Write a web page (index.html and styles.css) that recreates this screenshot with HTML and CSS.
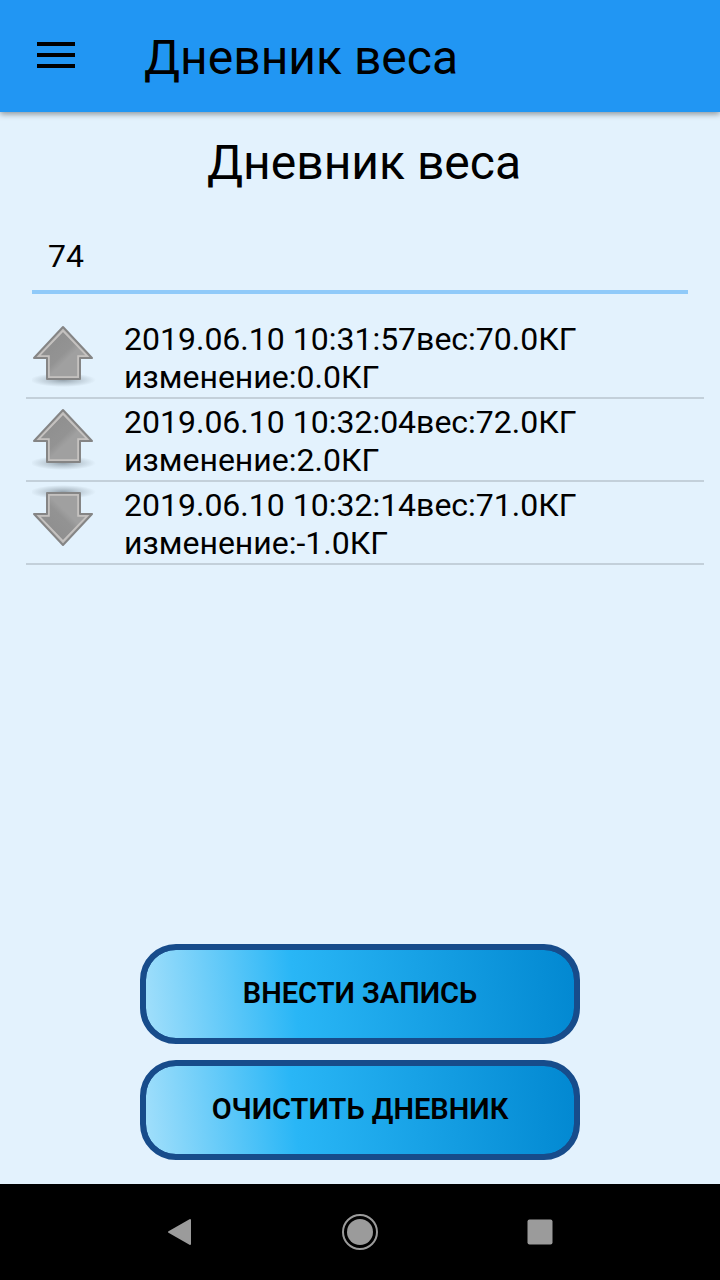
FILE: index.html
```html
<!DOCTYPE html>
<html lang="ru">
<head>
    <meta charset="utf-8">
    <meta name="viewport" content="width=device-width, initial-scale=1">
    <title>Дневник веса</title>
    <link rel="stylesheet" href="styles.css">
</head>
<body>
    <!-- shared arrow picture for the list -->
    <svg class="defs" width="0" height="0" aria-hidden="true">
        <defs>
            <linearGradient id="metal" x1="0" y1="0" x2="1" y2="1">
                <stop offset="0" stop-color="#8c8c8c"/>
                <stop offset="0.5" stop-color="#939393"/>
                <stop offset="0.6" stop-color="#a0a0a0"/>
                <stop offset="1" stop-color="#a0a0a0"/>
            </linearGradient>
            <radialGradient id="shade">
                <stop offset="0" stop-color="#5f6c76" stop-opacity="0.6"/>
                <stop offset="0.5" stop-color="#6c7a84" stop-opacity="0.3"/>
                <stop offset="1" stop-color="#6c7a84" stop-opacity="0"/>
            </radialGradient>
            <symbol id="arrow" viewBox="0 0 64 64">
                <ellipse cx="31" cy="56" rx="33" ry="7" fill="url(#shade)"/>
                <path d="M31 3 L60 34 H48 V55 H15 V34 H2 Z" fill="#bcbab8" stroke="#858585" stroke-width="2" stroke-linejoin="round"/>
                <path d="M31 7 L55 32 H46 V53 H17 V32 H7 Z" fill="url(#metal)" stroke="#c6c3c1" stroke-width="1.500"/>
            </symbol>
        </defs>
    </svg>

    <header class="toolbar">
        <button class="menu-button" type="button" aria-label="Меню">
            <svg width="38" height="26" viewBox="0 0 38 26">
                <path d="M0 2h38M0 13h38M0 24h38" stroke="#000" stroke-width="4"/>
            </svg>
        </button>
        <span class="toolbar-title">Дневник веса</span>
    </header>

    <main class="content">
        <h1>Дневник веса</h1>
        <input class="weight" type="text" inputmode="decimal" value="74" aria-label="Вес">

        <ul class="diary">
            <li>
                <svg class="arrow"><use href="#arrow"/></svg>
                <p>2019.06.10 10:31:57вес:70.0КГ<br>изменение:0.0КГ</p>
            </li>
            <li>
                <svg class="arrow"><use href="#arrow"/></svg>
                <p>2019.06.10 10:32:04вес:72.0КГ<br>изменение:2.0КГ</p>
            </li>
            <li>
                <svg class="arrow down"><use href="#arrow"/></svg>
                <p>2019.06.10 10:32:14вес:71.0КГ<br>изменение:-1.0КГ</p>
            </li>
        </ul>

        <div class="actions">
            <button class="action" type="button">ВНЕСТИ ЗАПИСЬ</button>
            <button class="action" type="button">ОЧИСТИТЬ ДНЕВНИК</button>
        </div>
    </main>

    <nav class="navbar">
        <button type="button" aria-label="Назад">
            <svg width="36" height="36" viewBox="0 0 36 36">
                <path d="M7 18 L28 6 V30 Z" fill="#9b9b9b" stroke="#9b9b9b" stroke-width="2" stroke-linejoin="round"/>
            </svg>
        </button>
        <button type="button" aria-label="Домой">
            <svg width="36" height="36" viewBox="0 0 36 36">
                <circle cx="18" cy="18" r="17" fill="none" stroke="#9b9b9b" stroke-width="2"/>
                <circle cx="18" cy="18" r="13" fill="#9b9b9b"/>
            </svg>
        </button>
        <button type="button" aria-label="Недавние">
            <svg width="36" height="36" viewBox="0 0 36 36">
                <rect x="5.500" y="5.500" width="25" height="25" rx="2" fill="#9b9b9b"/>
            </svg>
        </button>
    </nav>
</body>
</html>
```

FILE: styles.css
```css
* {
    box-sizing: border-box;
}
body {
    margin: 0;
    min-height: 100vh;
    display: flex;
    flex-direction: column;
    background: #e3f2fd;
    color: #000;
    font-family: Roboto, "Liberation Sans", sans-serif;
}
button {
    border: none;
    background: none;
    padding: 0;
    color: inherit;
    font-family: inherit;
    cursor: pointer;
}
svg {
    display: block;
}
.defs {
    position: absolute;
}
.toolbar {
    height: 112px;
    display: flex;
    align-items: center;
    padding-bottom: 2px;
    background: #2196f3;
    box-shadow: 0 2px 6px rgba(0, 0, 0, 0.4);
}
.menu-button {
    width: 112px;
    height: 100%;
    display: flex;
    align-items: center;
    justify-content: center;
}
.toolbar-title {
    padding: 6px 0 0 32px;
    font-size: 48px;
    line-height: 56px;
}
.content {
    flex: 1;
    display: flex;
    flex-direction: column;
    padding: 23px 16px 24px;
}
h1 {
    margin: 0;
    padding-left: 8px;
    text-align: center;
    font-size: 48px;
    font-weight: 400;
    line-height: 56px;
}
.weight {
    margin: 25px 16px 0;
    padding: 6px 16px 0;
    height: 78px;
    border: none;
    border-bottom: 4px solid #90caf9;
    background: none;
    color: inherit;
    font-family: inherit;
    font-size: 32px;
    outline: none;
}
.diary {
    margin: 22px 0 0 10px;
    padding: 0;
    list-style: none;
}
.diary li {
    display: flex;
    gap: 28px;
    height: 83px;
    padding: 4px 0 0 6px;
    border-bottom: 2px solid #c3d0da;
}
.diary p {
    margin: 0;
    font-size: 32px;
    line-height: 38px;
}
.arrow {
    width: 64px;
    height: 64px;
    margin-top: 4px;
}
.arrow.down {
    margin-top: -2px;
    transform: scaleY(-1);
}
.actions {
    margin-top: auto;
    display: flex;
    flex-direction: column;
    align-items: center;
    gap: 16px;
}
.action {
    width: 64%;
    height: 100px;
    padding-bottom: 2px;
    border: 6px solid #174c8b;
    border-radius: 36px;
    background: linear-gradient(84deg, #b3e5fc -5%, #29b6f6 35%, #0288d1) padding-box, #174c8b;
    font-size: 29px;
    font-weight: 600;
}
.navbar {
    height: 96px;
    display: flex;
    justify-content: center;
    gap: 144px;
    background: #000;
}
```
